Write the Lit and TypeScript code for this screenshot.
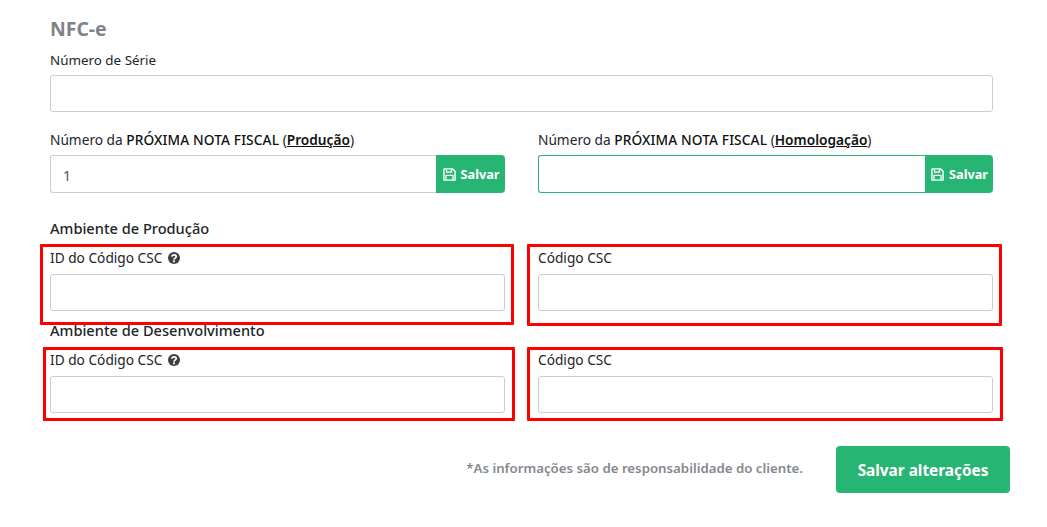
import { LitElement, html, css, svg } from "lit";
import { customElement } from "lit/decorators.js";

const saveIcon = svg`<path fill="none" stroke="currentColor" stroke-width="1.4" stroke-linejoin="round" d="M.9 .9h8.800l2.400 2.400v8.800H.9z"/><path fill="none" stroke="currentColor" stroke-width="1.300" d="M3.500 1.200v3h5v-3"/><path fill="none" stroke="currentColor" stroke-width="1.300" d="M3 11.800V7.300h7v4.500"/>`;

@customElement("app-root")
export class AppRoot extends LitElement {
  static styles = css`
    :host {
      display: block;
      height: 527px;
      overflow: hidden;
      background: #fff;
      font-family: "Noto Sans", "Open Sans", sans-serif;
      font-size: 13.7px;
      color: #212529;
    }

    .page {
      padding: 17px 54px 0 50px;
    }

    h1 {
      margin: 0;
      height: 24px;
      font-size: 19.4px;
      line-height: 24px;
      font-weight: 700;
      color: #7f8389;
    }

    label {
      display: block;
      height: 18px;
      line-height: 18px;
      margin-bottom: 6px;
      white-space: nowrap;
    }

    label b {
      font-weight: 500;
      letter-spacing: 0.12px;
      color: #111;
    }

    label u {
      font-weight: 600;
      color: #111;
    }

    .serie {
      margin-top: 10px;
      font-size: 13.4px;
    }

    .control {
      box-sizing: border-box;
      display: block;
      width: 100%;
      height: 37px;
      padding: 0 12px;
      border: 1px solid #ccc;
      border-radius: 3px;
      background: #fff;
      font: inherit;
      font-size: 14px;
      color: #495057;
      outline: none;
    }

    .grid {
      display: grid;
      grid-template-columns: 455px 455px;
      column-gap: 33px;
    }

    .numbers {
      margin-top: 19px;
    }

    .group {
      display: flex;
    }

    .group .control {
      flex: 1;
      min-width: 0;
      height: 38px;
      padding-top: 2px;
      border-right: 0;
      border-radius: 3px 0 0 3px;
    }

    .group .focused {
      border: 1px solid #27b574;
      border-right: 0;
    }

    .save {
      display: flex;
      flex: none;
      align-items: center;
      justify-content: center;
      gap: 5px;
      width: 69px;
      height: 38px;
      padding: 0 0 0 1px;
      border: 0;
      border-radius: 0 4px 4px 0;
      background: #27b574;
      color: #fff;
      font: inherit;
      font-size: 12.7px;
      font-weight: 700;
    }

    .save.narrow {
      width: 68px;
    }

    .save svg {
      width: 13px;
      height: 13px;
    }

    h2 {
      margin: 0 0 11px;
      height: 20px;
      font-size: 14.6px;
      line-height: 20px;
      font-weight: 500;
      color: #212529;
    }

    .prod {
      margin-top: 25px;
    }

    .dev {
      margin-top: 9px;
    }

    .field {
      position: relative;
    }

    .field label {
      margin-bottom: 7px;
    }

    .help {
      width: 12px;
      height: 12px;
      margin-left: 2px;
      vertical-align: -1px;
    }

    /* red annotation boxes lie over the form */
    .mark {
      position: absolute;
      box-sizing: border-box;
      border: 3px solid #f00;
      border-radius: 1px;
      pointer-events: none;
    }

    .m1 {
      inset: -5px -9px -14px -10px;
    }

    .m2 {
      inset: -5px -9px -15px -11px;
    }

    .m3 {
      inset: -4px -10px -8px -7px;
    }

    .m4 {
      inset: -4px -10px -8px -11px;
    }

    .footer {
      display: flex;
      align-items: center;
      justify-content: flex-end;
      gap: 33px;
      margin: 33px -17px 0 0;
    }

    .note {
      margin-bottom: 4px;
      font-size: 13.25px;
      font-weight: 600;
      color: #84888e;
    }

    .submit {
      width: 174px;
      height: 47px;
      padding: 0;
      border: 0;
      border-radius: 4px;
      background: #27b574;
      color: #fff;
      font: inherit;
      font-size: 15.35px;
      font-weight: 700;
    }
  `;

  private saveButton(narrow = false) {
    return html`<button class="save ${narrow ? "narrow" : ""}">
      <svg viewBox="0 0 13 13">${saveIcon}</svg>Salvar
    </button>`;
  }

  private field(label: unknown, mark: string) {
    return html`<div class="field">
      <label>${label}</label>
      <input class="control" />
      <div class="mark ${mark}"></div>
    </div>`;
  }

  private cscId() {
    return html`ID do Código CSC
      <svg class="help" viewBox="0 0 24 24">
        <circle cx="12" cy="12" r="12" fill="#3f3f3f" />
        <path
          fill="none"
          stroke="#fff"
          stroke-width="3.4"
          d="M7.6 9.4c.3-2.4 2-3.6 4.5-3.6s4.3 1.4 4.3 3.4c0 3.2-4.4 3-4.4 6.2"
        />
        <rect x="10.1" y="16.8" width="3.8" height="3.6" fill="#fff" />
      </svg>`;
  }

  render() {
    return html`
      <div class="page">
        <h1>NFC-e</h1>
        <div class="serie">
          <label>Número de Série</label>
          <input class="control" />
        </div>
        <div class="grid numbers">
          <div>
            <label
              >Número da <b>PRÓXIMA NOTA FISCAL</b> (<u>Produção</u>)</label
            >
            <div class="group">
              <input class="control" value="1" />
              ${this.saveButton()}
            </div>
          </div>
          <div>
            <label
              >Número da <b>PRÓXIMA NOTA FISCAL</b> (<u>Homologação</u>)</label
            >
            <div class="group">
              <input class="control focused" />
              ${this.saveButton(true)}
            </div>
          </div>
        </div>
        <h2 class="prod">Ambiente de Produção</h2>
        <div class="grid">
          ${this.field(this.cscId(), "m1")} ${this.field("Código CSC", "m2")}
        </div>
        <h2 class="dev">Ambiente de Desenvolvimento</h2>
        <div class="grid">
          ${this.field(this.cscId(), "m3")} ${this.field("Código CSC", "m4")}
        </div>
        <div class="footer">
          <span class="note"
            >*As informações são de responsabilidade do cliente.</span
          >
          <button class="submit">Salvar alterações</button>
        </div>
      </div>
    `;
  }
}
